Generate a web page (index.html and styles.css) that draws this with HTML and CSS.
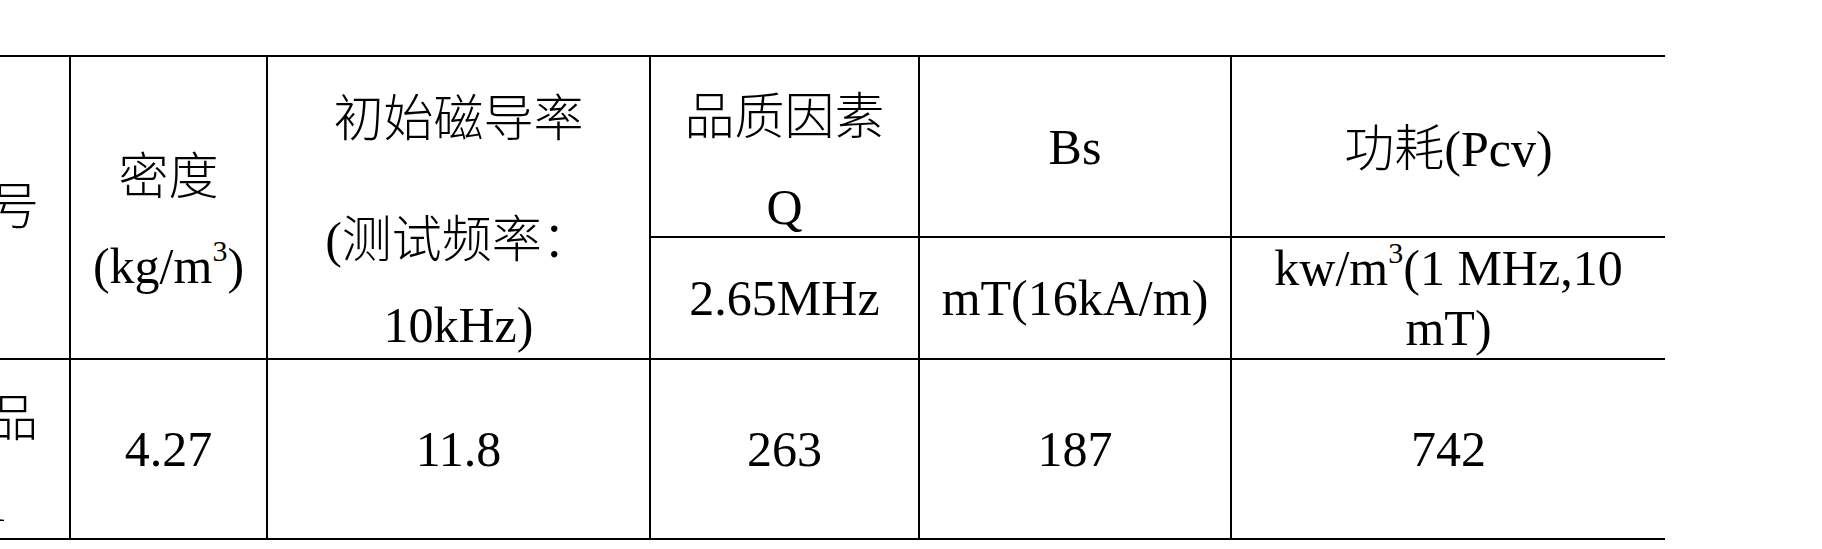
FILE: index.html
```html
<!DOCTYPE html>
<html lang="zh-CN">
<head>
<meta charset="utf-8">
<title>性能参数表</title>
<link rel="stylesheet" href="styles.css">
</head>
<body>
<div class="page">
  <table class="spec">
    <colgroup>
      <col class="w1"><col class="w2"><col class="w3"><col class="w4"><col class="w5"><col class="w6">
    </colgroup>
    <tr class="r1">
      <td rowspan="2" class="c1 h1"><div class="ln">型号</div></td>
      <td rowspan="2" class="h2">
        <div class="ln">密度</div>
        <div class="ln g33">(kg/m<span class="sup">3</span>)</div>
      </td>
      <td rowspan="2" class="h3">
        <div class="ln">初始磁导率</div>
        <div class="ln g65">(测试频率：</div>
        <div class="ln g29">10kHz)</div>
      </td>
      <td class="h4">
        <div class="ln">品质因素</div>
        <div class="ln g34">Q</div>
      </td>
      <td class="h5"><div class="ln">Bs</div></td>
      <td class="h6 last"><div class="ln">功耗(Pcv)</div></td>
    </tr>
    <tr class="r2">
      <td class="s4"><div class="ln">2.65MHz</div></td>
      <td class="s5"><div class="ln">mT(16kA/m)</div></td>
      <td class="s6 last">
        <div class="ln">kw/m<span class="sup">3</span>(1 MHz,10</div>
        <div class="ln g4">mT)</div>
      </td>
    </tr>
    <tr class="r3">
      <td class="c1 b1">
        <div class="ln pr31">样品</div>
        <div class="ln g29 pr62">1</div>
      </td>
      <td class="bv"><div class="ln">4.27</div></td>
      <td class="bv"><div class="ln">11.8</div></td>
      <td class="bv"><div class="ln">263</div></td>
      <td class="bv"><div class="ln">187</div></td>
      <td class="bv last"><div class="ln">742</div></td>
    </tr>
  </table>
</div>
</body>
</html>
```
FILE: styles.css
```css
html, body {
  margin: 0;
  padding: 0;
  background: #ffffff;
  overflow: hidden;
}

.page {
  padding-top: 55px;
}

.spec {
  table-layout: fixed;
  width: 1744px;
  margin-left: -79px;
  border-collapse: separate;
  border-spacing: 0;
  border-top: 2px solid #000;
  font-family: "Liberation Serif", "Noto Sans CJK SC", serif;
  font-size: 50px;
  font-weight: 300;
  color: #000;
}

.w1 { width: 150px; }
.w2 { width: 197px; }
.w3 { width: 383px; }
.w4 { width: 269px; }
.w5 { width: 312px; }
.w6 { width: 433px; }

.r1 { height: 181px; }
.r2 { height: 122px; }
.r3 { height: 180px; }

.spec td {
  padding: 0;
  vertical-align: top;
  text-align: center;
  border-right: 2px solid #000;
  border-bottom: 2px solid #000;
  white-space: nowrap;
}

.spec td.last {
  border-right: none;
}

.ln {
  line-height: 56px;
}

.sup {
  font-size: 30px;
  line-height: 0;
  vertical-align: 22px;
}

/* first (cut off) column */
.spec .c1 { text-align: right; }
.spec .h1 { padding-top: 122px; padding-right: 30px; }
.spec .b1 { padding-top: 31px; }
.pr31 { padding-right: 31px; }
.pr62 { padding-right: 62px; }

/* header cells */
.spec .h2 { padding-top: 92px; }
.spec .h3 { padding-top: 34px; }
.spec .h4 { padding-top: 32px; }
.spec .h5 { padding-top: 62px; }
.spec .h6 { padding-top: 64px; }

/* sub-header cells */
.spec .s4, .spec .s5 { padding-top: 32px; }
.spec .s6 { padding-top: 2px; }

/* body values */
.spec .bv { padding-top: 61px; }

/* gaps between stacked lines */
.g4 { margin-top: 4px; }
.g29 { margin-top: 29px; }
.g33 { margin-top: 33px; }
.g34 { margin-top: 34px; }
.g65 { margin-top: 65px; }
```
